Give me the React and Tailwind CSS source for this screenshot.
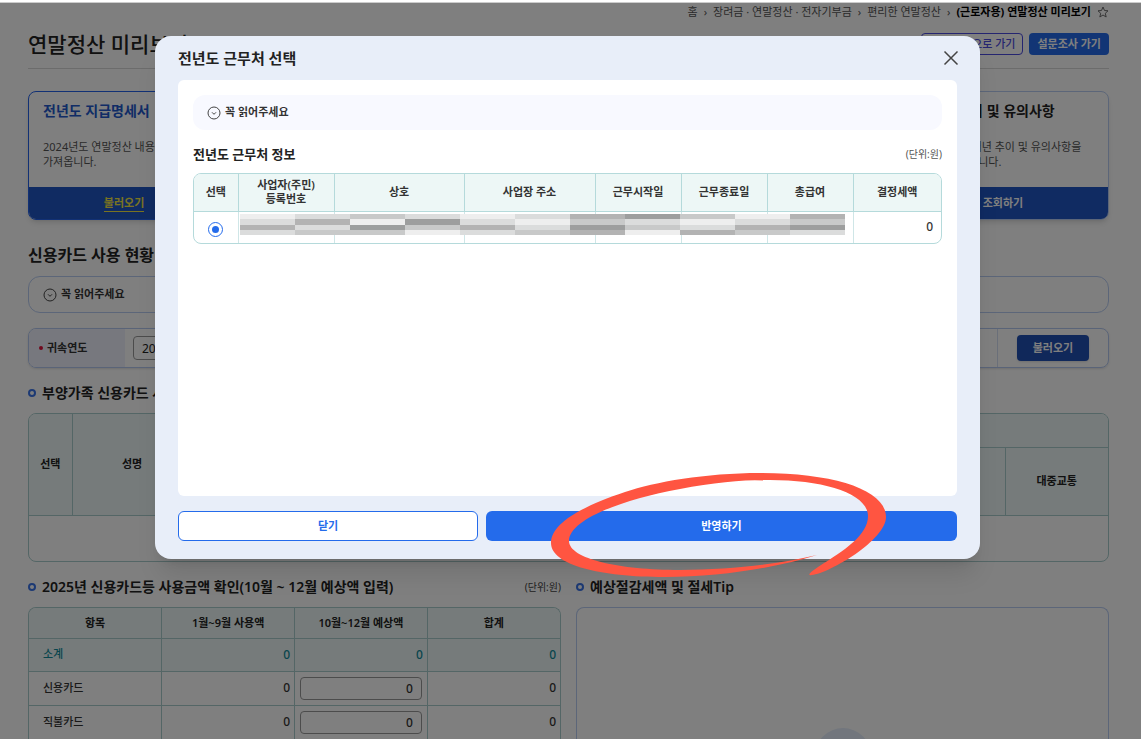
import React from 'react';

const CARDS = [
  {
    title: '전년도 지급명세서',
    lines: ['2024년도 연말정산 내용', '가져옵니다.'],
    action: '불러오기',
    active: true,
  },
  { title: '신용카드 자료', lines: ['사용 내역을', '가져옵니다.'], action: '불러오기' },
  { title: '예상세액 계산', lines: ['예상세액을', '계산합니다.'], action: '계산하기' },
  { title: '절세 도움말', lines: ['절세 방법을', '확인합니다.'], action: '조회하기' },
  {
    title: '10년간 추이 및 유의사항',
    lines: ['공제항목별 3개년 추이 및 유의사항을', '확인할 수 있습니다.'],
    action: '조회하기',
  },
];

const USAGE_ROWS = ['신용카드', '직불카드'];

const JOB_COLUMNS = [
  { label: '선택', width: 'w-[44px]' },
  { label: '사업자(주민)\n등록번호', width: 'w-[96px]' },
  { label: '상호', width: 'w-[130px]' },
  { label: '사업장 주소', width: 'w-[131px]' },
  { label: '근무시작일', width: 'w-[86px]' },
  { label: '근무종료일', width: 'w-[86px]' },
  { label: '총급여', width: 'w-[86px]' },
  { label: '결정세액', width: 'w-[88px]' },
];

// Shades of the masked cells, row by row
const MASK = ['ABCBABDECAD', 'BDAEBACBABC', 'DBECDBECBDE', 'BCCABCDADCB'];
const SHADES = { A: '#eeeeee', B: '#dbdcdc', C: '#c8c9c9', D: '#b3b3b3', E: '#9d9e9e' };

const Star = () => (
  <svg viewBox="0 0 24 24" className="h-3 w-3" fill="none" stroke="#6b6b6b" strokeWidth="2" strokeLinejoin="round">
    <path d="M12 2l3 7 7 .6-5.400 5 1.700 7.400L12 18l-6.300 4 1.700-7.400L2 9.600 9 9z" />
  </svg>
);

const CircleDown = () => (
  <svg viewBox="0 0 14 14" className="h-3.5 w-3.5" fill="none" stroke="#444" strokeWidth="1">
    <circle cx="7" cy="7" r="6" />
    <path d="M5 6.300l2 2 2-2" />
  </svg>
);

const Bullet = () => <span className="h-2 w-2 rounded-full border-2 border-[#3b74e8]" />;

const Card = ({ title, lines, action, active }) => (
  <section
    className={`flex-1 overflow-hidden rounded-lg border shadow-md ${active ? 'border-[#2563eb]' : 'border-[#b9cdf2]'}`}
  >
    <div className="h-[95px] whitespace-nowrap px-3.5 pt-[9px]">
      <h2 className={`text-sm font-bold leading-5 ${active ? 'text-[#2259cc]' : 'text-[#222]'}`}>{title}</h2>
      <p className="mt-[18px] text-[11px] leading-[15px] text-[#555]">
        {lines[0]}
        <br />
        {lines[1]}
      </p>
    </div>
    <div className="flex h-8 items-center justify-center gap-3 bg-[#2056c4] text-[11px] font-semibold text-white">
      <a href="#" className={active ? 'border-b border-[#f5e642] leading-4 text-[#f5e642]' : 'leading-4'}>
        {action}
      </a>
      {active && <span className="w-2" />}
    </div>
  </section>
);

const Notice = ({ className }) => (
  <button
    type="button"
    className={`flex w-full items-center gap-1 px-3.5 text-[11px] font-semibold text-[#333] ${className}`}
  >
    <CircleDown />
    꼭 읽어주세요
  </button>
);

const Header = () => (
  <header className="border-b border-[#d8d8d8] pb-2.5">
    <nav className="flex h-[17px] items-center justify-end gap-1.5 text-[11px] leading-4 text-[#555]">
      <a href="#">홈</a>
      <span>›</span>
      <a href="#">장려금 · 연말정산 · 전자기부금</a>
      <span>›</span>
      <a href="#">편리한 연말정산</a>
      <span>›</span>
      <b className="text-black">(근로자용) 연말정산 미리보기</b>
      <Star />
    </nav>
    <div className="mt-2.5 flex items-center justify-between">
      <h1 className="text-[21px] font-medium leading-7">연말정산 미리보기</h1>
      <div className="flex gap-1.5 text-[11px] font-medium">
        <button type="button" className="h-[22px] rounded-sm border border-[#4a4ae0] px-[7px] text-[#4a4ae0]">
          이전 화면으로 가기
        </button>
        <button type="button" className="h-[22px] rounded-sm bg-[#246beb] px-2 font-semibold text-white">
          설문조사 가기
        </button>
      </div>
    </div>
  </header>
);

const YearFilter = () => (
  <div className="mt-[15px] flex h-10 overflow-hidden rounded-lg border border-[#b4c8f0] text-[11px] shadow-sm">
    <label htmlFor="year" className="flex w-24 items-center gap-1 bg-[#eef0fc] pl-2.5 font-semibold text-[#333]">
      <span className="h-1 w-1 rounded-full bg-[#e0103a]" />
      귀속연도
    </label>
    <div className="flex flex-1 items-center border-r border-[#d5def2] pl-2">
      <select id="year" defaultValue="2025" className="h-6 w-24 rounded-sm border border-[#999] bg-white pl-1 text-xs">
        <option>2025</option>
      </select>
    </div>
    <div className="flex w-[110px] items-center justify-center">
      <button type="button" className="h-[26px] w-[72px] rounded bg-[#2050b4] font-semibold text-white shadow">
        불러오기
      </button>
    </div>
  </div>
);

const FamilyTable = () => (
  <div className="mt-2.5 overflow-hidden rounded-lg border border-[#a9cdcd]">
    <table className="w-full table-fixed border-collapse text-[11px]">
      <colgroup>
        <col className="w-[43px]" />
        <col className="w-[120px]" />
        <col />
        <col />
        <col />
        <col className="w-[103px]" />
      </colgroup>
      <thead className="bg-[#edf7f6]">
        <tr className="h-[33px]">
          <th rowSpan={2} className="border-b border-r border-[#a9cdcd] font-semibold">선택</th>
          <th rowSpan={2} className="border-b border-r border-[#a9cdcd] font-semibold">성명</th>
          <th colSpan={4} className="border-b border-[#a9cdcd] font-semibold">신용카드 등 사용금액</th>
        </tr>
        <tr className="h-[68px]">
          <th className="border-b border-r border-[#a9cdcd] font-semibold">신용카드</th>
          <th className="border-b border-r border-[#a9cdcd] font-semibold">직불카드</th>
          <th className="border-b border-r border-[#a9cdcd] font-semibold">전통시장</th>
          <th className="border-b border-[#a9cdcd] font-semibold">대중교통</th>
        </tr>
      </thead>
      <tbody>
        <tr className="h-[46px]">
          <td colSpan={6} className="text-center">조회된 내역이 없습니다.</td>
        </tr>
      </tbody>
    </table>
  </div>
);

const UsageTable = () => (
  <div className="mt-2.5 overflow-hidden rounded-t-lg border border-b-0 border-[#a9cdcd]">
    <table className="w-full table-fixed border-collapse text-[11px]">
      <thead className="bg-[#edf7f6]">
        <tr className="h-[30px] divide-x divide-[#a9cdcd] border-b border-[#a9cdcd]">
          <th className="font-semibold">항목</th>
          <th className="font-semibold">1월~9월 사용액</th>
          <th className="font-semibold">10월~12월 예상액</th>
          <th className="font-semibold">합계</th>
        </tr>
      </thead>
      <tbody>
        <tr className="h-[33px] divide-x divide-[#a9cdcd] border-b border-[#a9cdcd] bg-[#edf7f6] font-medium text-[#0f8a9a]">
          <td className="pl-3.5">소계</td>
          <td className="pr-1 text-right text-xs">0</td>
          <td className="pr-1 text-right text-xs">0</td>
          <td className="pr-1 text-right text-xs">0</td>
        </tr>
        {USAGE_ROWS.map((name) => (
          <tr key={name} className="h-[34px] divide-x divide-[#a9cdcd] border-b border-[#a9cdcd] font-medium text-[#333]">
            <td className="pl-3.5">{name}</td>
            <td className="pr-1 text-right text-xs">0</td>
            <td className="px-[5px]">
              <input
                aria-label={name}
                defaultValue="0"
                className="block h-[23px] w-full rounded-sm border border-[#999] pr-2 text-right text-xs"
              />
            </td>
            <td className="pr-1 text-right text-xs">0</td>
          </tr>
        ))}
      </tbody>
    </table>
  </div>
);

const Mask = () => (
  <svg
    viewBox="0 0 11 4"
    preserveAspectRatio="none"
    shapeRendering="crispEdges"
    className="absolute bottom-2 left-[6%] ml-px h-[21px] w-[81%]"
  >
    {MASK.map((row, y) =>
      row.split('').map((shade, x) => (
        <rect key={`${x}-${y}`} x={x} y={y} width="1" height="1" fill={SHADES[shade]} />
      ))
    )}
  </svg>
);

const JobTable = () => (
  <div className="relative mt-[9px] overflow-hidden rounded-lg border border-[#b5dadb]">
    <table className="w-full table-fixed border-collapse text-[11px] text-[#333]">
      <thead className="bg-[#edf7f6]">
        <tr className="h-[37px] divide-x divide-[#b5dadb] border-b border-[#b5dadb]">
          {JOB_COLUMNS.map((col) => (
            <th key={col.label} className={`whitespace-pre-line p-0 font-semibold leading-[14px] ${col.width}`}>
              {col.label}
            </th>
          ))}
        </tr>
      </thead>
      <tbody>
        <tr className="h-8 divide-x divide-[#cfe6e7]">
          <td>
            <input
              type="radio"
              defaultChecked
              aria-label="선택"
              className="mx-auto mt-1 block h-[15px] w-[15px] appearance-none rounded-full border border-[#246beb] bg-[#246beb] bg-clip-content p-[3px]"
            />
          </td>
          <td />
          <td />
          <td />
          <td />
          <td />
          <td />
          <td className="pr-2 text-right text-xs font-medium">0</td>
        </tr>
      </tbody>
    </table>
    <Mask />
  </div>
);

const Scribble = () => (
  <svg viewBox="550 472 338 105" className="pointer-events-none absolute -bottom-[18px] right-[92px] h-[105px] w-[338px]">
    <path
      fill="#ff5541"
      d="M817 555C780 564 730 570 680 570C620 570 569 559 569 541C569 520 620 500 680 489C715 482 745 480 770 480C825 480 868 494 868 516C868 535 845 550 818 567C809 573 807 576 812 575C830 573 886 540 886 517C886 490 835 473 760 473C705 473 655 482 625 492C580 507 551 524 551 543C551 565 600 577 665 577C720 577 775 568 817 555Z"
    />
  </svg>
);

const JobDialog = () => (
  <div
    role="dialog"
    aria-labelledby="dialog-title"
    className="relative w-full max-w-[825px] rounded-2xl bg-[#e8eef9] px-[23px] pb-[18px] shadow-xl"
  >
    <div className="flex h-11 items-center justify-between">
      <h2 id="dialog-title" className="text-[15px] font-semibold text-[#222]">전년도 근무처 선택</h2>
      <button type="button" aria-label="창 닫기" className="-mr-0.5">
        <svg viewBox="0 0 16 16" className="h-4 w-4" stroke="#444" strokeWidth="1.500">
          <path d="M1.500 1.500l13 13M14.500 1.500l-13 13" />
        </svg>
      </button>
    </div>
    <div className="h-[416px] rounded-md bg-white p-[15px]">
      <Notice className="h-[35px] rounded-xl bg-[#f8f9ff]" />
      <div className="mt-3.5 flex items-center justify-between">
        <h3 className="text-[13px] font-semibold leading-5 text-[#222]">전년도 근무처 정보</h3>
        <span className="text-[10px] text-[#555]">(단위:원)</span>
      </div>
      <JobTable />
    </div>
    <div className="mt-[15px] flex gap-2 text-[11px] font-semibold">
      <button type="button" className="h-[30px] w-[300px] rounded-md border border-[#246beb] bg-white text-[#246beb]">
        닫기
      </button>
      <button type="button" className="h-[30px] flex-1 rounded-md bg-[#246beb] text-white">
        반영하기
      </button>
    </div>
    <Scribble />
  </div>
);

export default function App() {
  return (
    <div className="relative h-screen overflow-hidden bg-white font-['Noto_Sans','Noto_Sans_CJK_KR',sans-serif] text-[#222]">
      <main className="pl-7 pr-8 pt-[3px]">
        <Header />
        <div className="mt-[22px] flex gap-[5px]">
          {CARDS.map((card) => (
            <Card key={card.title} {...card} />
          ))}
        </div>
        <h2 className="mt-6 text-base font-semibold leading-[22px]">신용카드 사용 현황</h2>
        <Notice className="mt-2.5 h-[37px] rounded-xl border border-[#b9cdf2]" />
        <YearFilter />
        <h3 className="mt-[15px] flex items-center gap-1.5 text-sm font-semibold leading-5">
          <Bullet />
          부양가족 신용카드 사용내역
        </h3>
        <FamilyTable />
        <div className="mt-[15px] flex gap-[15px]">
          <section className="min-w-0 flex-1">
            <div className="flex items-center justify-between">
              <h3 className="flex items-center gap-1.5 text-sm font-semibold leading-5">
                <Bullet />
                2025년 신용카드등 사용금액 확인(10월 ~ 12월 예상액 입력)
              </h3>
              <span className="text-[10px] text-[#444]">(단위:원)</span>
            </div>
            <UsageTable />
          </section>
          <section className="flex min-w-0 flex-1 flex-col">
            <h3 className="flex items-center gap-1.5 text-sm font-semibold leading-5">
              <Bullet />
              예상절감세액 및 절세Tip
            </h3>
            <div className="mt-2.5 flex flex-1 justify-center rounded-t-lg border border-b-0 border-[#b9cdf2] pt-[120px]">
              <span className="h-14 w-14 rounded-full bg-[#e4edfb]" />
            </div>
          </section>
        </div>
      </main>
      <div className="absolute inset-x-0 bottom-0 top-0.5 flex items-start justify-center border-t border-[#ccc] bg-black/50 pl-5 pr-[26px] pt-[33px]">
        <JobDialog />
      </div>
    </div>
  );
}
